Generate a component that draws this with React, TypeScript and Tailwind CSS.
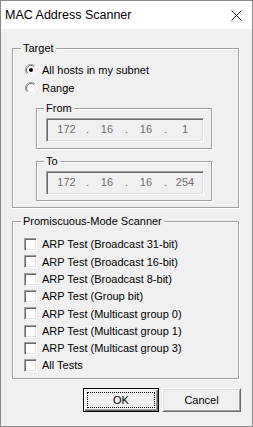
import React from 'react';

const font = { fontFamily: '"Liberation Sans", Arial, sans-serif' };

function Radio({ checked }: { checked?: boolean }) {
  return (
    <svg width="12" height="12" viewBox="0 0 12 12" className="shrink-0">
      <circle cx="6" cy="6" r="5.5" fill="#fff" />
      <path d="M10 2 A5.5 5.5 0 0 0 2 10" fill="none" stroke="#a0a0a0" strokeWidth="1" />
      <path d="M2 10 A5.5 5.5 0 0 0 10 2" fill="none" stroke="#fff" strokeWidth="1" />
      <path d="M9.2 2.8 A4.5 4.5 0 0 0 2.8 9.2" fill="none" stroke="#696969" strokeWidth="1" />
      <path d="M2.8 9.2 A4.5 4.5 0 0 0 9.2 2.8" fill="none" stroke="#e3e3e3" strokeWidth="1" />
      {checked && <circle cx="6" cy="6" r="2" fill="#000" />}
    </svg>
  );
}

function Check() {
  return (
    <div className="w-[13px] h-[13px] shrink-0 bg-white border border-t-[#a0a0a0] border-l-[#a0a0a0] border-b-white border-r-white shadow-[inset_1px_1px_0_#696969,inset_-1px_-1px_0_#e3e3e3]" />
  );
}

function IpBox({ parts }: { parts: string[] }) {
  return (
    <div className="ml-[9px] mt-[3px] w-[158px] h-[24px] flex items-center pb-[1px] border border-t-[#a0a0a0] border-l-[#a0a0a0] border-b-white border-r-white shadow-[inset_1px_1px_0_#696969,inset_-1px_-1px_0_#e3e3e3] text-[11px] text-[#6d6d6d]">
      <span className="w-[40px] text-center">{parts[0]}</span>
      <span>.</span>
      <span className="w-[37px] text-center">{parts[1]}</span>
      <span>.</span>
      <span className="w-[37px] text-center">{parts[2]}</span>
      <span>.</span>
      <span className="w-[37px] text-center">{parts[3]}</span>
    </div>
  );
}

const tests = [
  'ARP Test (Broadcast 31-bit)',
  'ARP Test (Broadcast 16-bit)',
  'ARP Test (Broadcast 8-bit)',
  'ARP Test (Group bit)',
  'ARP Test (Multicast group 0)',
  'ARP Test (Multicast group 1)',
  'ARP Test (Multicast group 3)',
  'All Tests',
];

const fieldsetCls =
  'border border-[#a0a0a0] shadow-[inset_1px_1px_0_#fff,1px_1px_0_#fff]';
const legendCls = 'ml-[8px] px-[2px] bg-[#f0f0f0] text-[11px] leading-[13px] text-black';
const subLegendCls = 'ml-[7px] px-[2px] bg-[#f0f0f0] text-[11px] leading-[13px] text-black';

export default function App() {
  return (
    <div
      style={font}
      className="w-[253px] h-[427px] flex flex-col border border-[#8a8a8a] bg-[#f0f0f0] text-black select-none"
    >
      <div className="h-[28px] bg-white flex items-center justify-between pl-[4px] pr-[10px]">
        <span className="text-[12.5px]">MAC Address Scanner</span>
        <svg width="11" height="11" viewBox="0 0 11 11">
          <path d="M0.5 0.5 L10.5 10.5 M10.5 0.5 L0.5 10.5" stroke="#1a1a1a" strokeWidth="1" />
        </svg>
      </div>

      <div className="flex-1 flex flex-col px-[11px]">
        <fieldset className={`${fieldsetCls} mt-[13px] w-[227px] pb-[6px]`}>
          <legend className={legendCls}>Target</legend>
          <div className="mt-[6px] h-[18px] flex items-center pl-[12px] gap-[5px] text-[11px]">
            <Radio checked />
            <span>All hosts in my subnet</span>
          </div>
          <div className="h-[18px] flex items-center pl-[12px] gap-[5px] text-[11px]">
            <Radio />
            <span>Range</span>
          </div>

          <fieldset className={`${fieldsetCls} mt-[5px] ml-[23px] w-[176px] pb-[6px]`}>
            <legend className={subLegendCls}>From</legend>
            <IpBox parts={['172', '16', '16', '1']} />
          </fieldset>

          <fieldset className={`${fieldsetCls} mt-[6px] ml-[23px] w-[176px] pb-[5px]`}>
            <legend className={subLegendCls}>To</legend>
            <IpBox parts={['172', '16', '16', '254']} />
          </fieldset>
        </fieldset>

        <fieldset className={`${fieldsetCls} mt-[7px] w-[227px] pb-[4px]`}>
          <legend className={legendCls}>Promiscuous-Mode Scanner</legend>
          <div className="mt-[8px] grid grid-rows-[repeat(8,17.3px)]">
            {tests.map((t) => (
              <div key={t} className="flex items-center pl-[11px] gap-[5px] text-[11px]">
                <Check />
                <span>{t}</span>
              </div>
            ))}
          </div>
        </fieldset>

        <div className="mt-[9px] flex gap-[3px] pl-[71px]">
          <button className="w-[76px] h-[24px] p-[3px] bg-[#f0f0f0] border border-black shadow-[inset_1px_1px_0_#fff,inset_-1px_-1px_0_#696969,inset_-2px_-2px_0_#a0a0a0]">
            <span className="w-full h-full flex items-center justify-center border border-dotted border-black text-[11px]">
              OK
            </span>
          </button>
          <button className="w-[79px] h-[24px] bg-[#f0f0f0] border border-t-white border-l-white border-b-[#696969] border-r-[#696969] shadow-[inset_1px_1px_0_#e3e3e3,inset_-1px_-1px_0_#a0a0a0] flex items-center justify-center text-[11px]">
            Cancel
          </button>
        </div>
      </div>
    </div>
  );
}
